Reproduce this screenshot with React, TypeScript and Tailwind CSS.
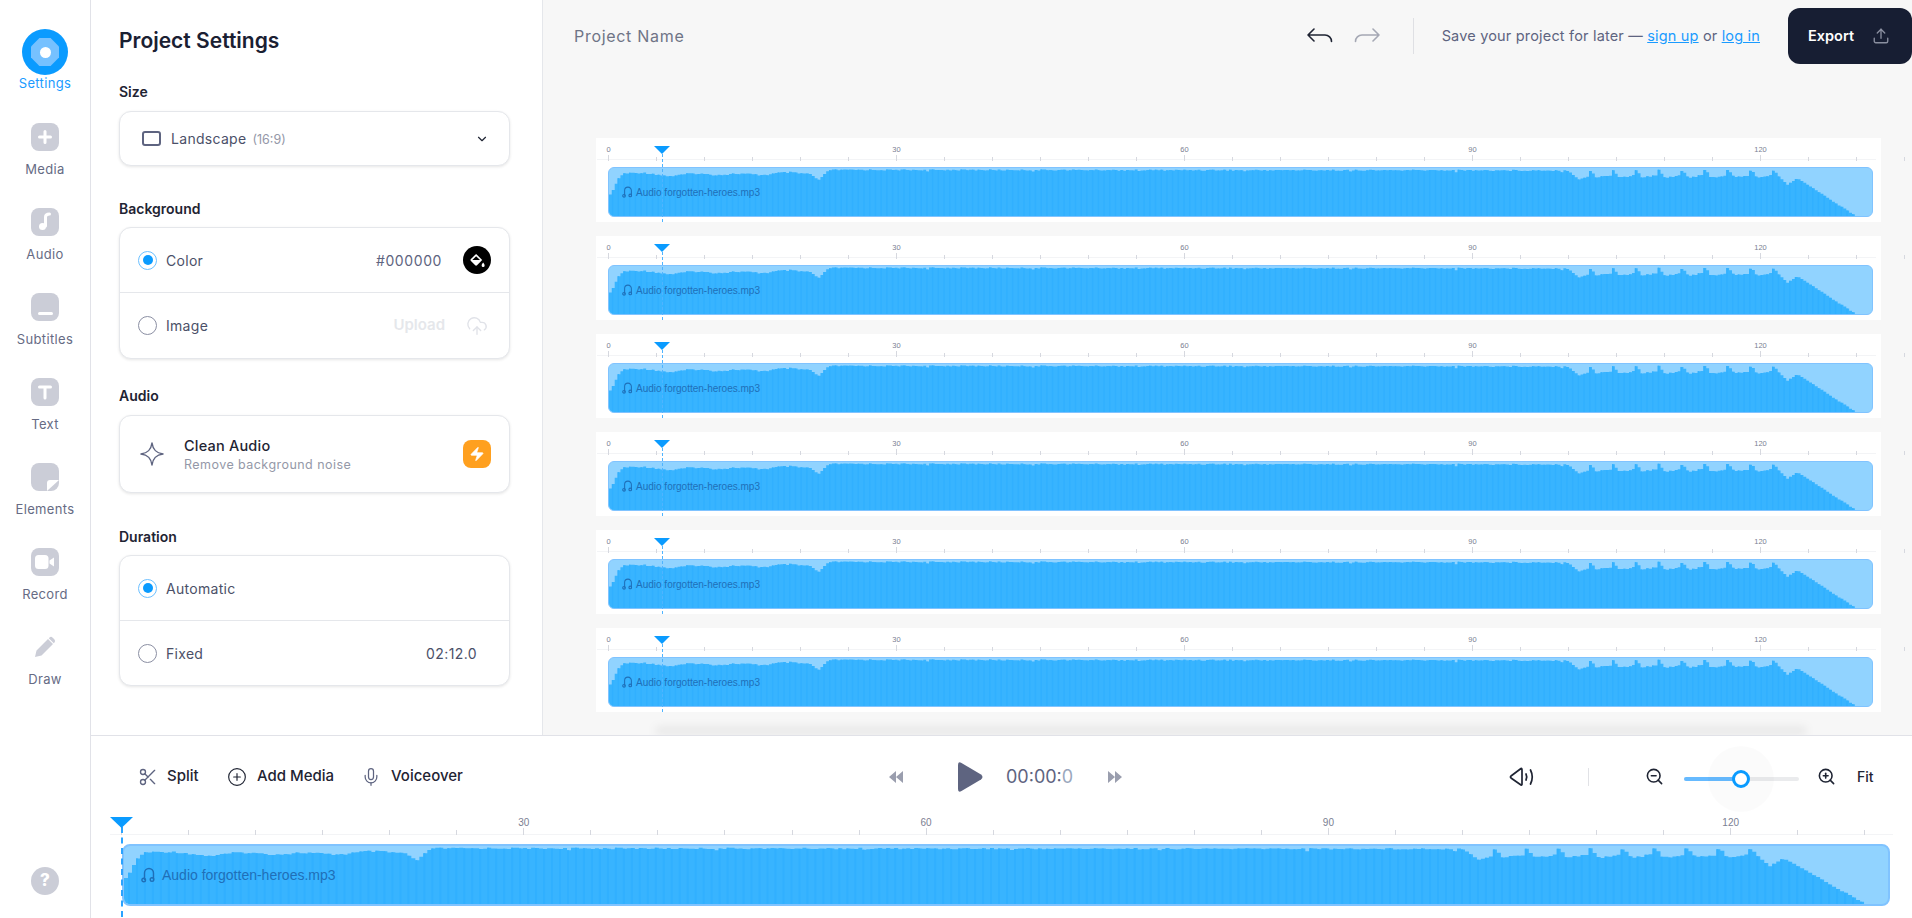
import React from "react";
import { Scissors, CirclePlus, Mic, ZoomIn, ZoomOut, ChevronDown, CloudUpload, Zap, Upload } from "lucide-react";

const N = 442;
const ctrl: [number, number][] = [
  [0, 0.55], [0.0025, 0.45], [0.006, 0.24], [0.011, 0.09], [0.03, 0.13], [0.05, 0.15], [0.08, 0.12], [0.1, 0.14],
  [0.157, 0.1], [0.165, 0.25], [0.173, 0.04], [0.758, 0.05], [0.767, 0.24], [0.775, 0.17], [0.924, 0.14], [0.932, 0.35],
  [0.94, 0.21], [0.986, 1], [1, 1],
];
function lerp(f: number) {
  for (let i = 1; i < ctrl.length; i++) {
    if (f <= ctrl[i][0]) {
      const [a, b] = ctrl[i - 1];
      const [c, d] = ctrl[i];
      return b + ((f - a) / (c - a)) * (d - b);
    }
  }
  return 1;
}
function noise(i: number) {
  const s = Math.sin(i * 12.9898) * 43758.5453;
  return s - Math.floor(s);
}
function topAt(i: number) {
  const f = i / N;
  let y = lerp(f);
  if (f > 0.011 && f < 0.157) y += Math.sin(f * 170) * 0.02 + (noise(i) - 0.5) * 0.03;
  else if (f >= 0.173 && f < 0.758) y += (noise(i) - 0.5) * 0.025 + (i % 37 === 0 ? 0.03 : 0);
  else if (f >= 0.775 && f < 0.924) {
    const saw = ((f - 0.775) / 0.0182) % 1;
    y = saw < 0.07 ? 0.05 : saw < 0.3 ? 0.05 + ((saw - 0.07) / 0.23) * 0.14 : 0.2 - (saw - 0.3) * 0.07;
    y += (noise(i) - 0.5) * 0.03;
  } else if (f >= 0.94 && f < 0.986) y += (noise(i) - 0.5) * 0.015;
  return Math.min(1, Math.max(0.02, y));
}
const tops = Array.from({ length: N }, (_, i) => topAt(i) * 100);
const basePath = "M0 100 " + tops.map((t, i) => `L${i} ${t.toFixed(1)} L${i + 1} ${t.toFixed(1)}`).join(" ") + ` L${N} 100 Z`;
const stripePath = tops.map((t, i) => (i % 2 ? `M${i} ${t.toFixed(1)} H${i + 0.5} V100 H${i} Z` : "")).join(" ");

function Note({ className }: { className: string }) {
  return (
    <svg viewBox="0 0 16 16" className={className} fill="none" stroke="#1f6fb8" strokeWidth="1.4">
      <path d="M3.5 13 V6 a4.5 4.5 0 0 1 9 0 V12.5" />
      <circle cx="2.7" cy="13" r="1.8" />
      <circle cx="11" cy="12.6" r="1.8" />
    </svg>
  );
}

function Wave({ big }: { big: boolean }) {
  return (
    <div className={big
      ? "relative h-[62px] w-[1768px] overflow-hidden rounded-lg border-2 border-[#80c3ff] bg-[#91d3ff]"
      : "relative h-[50px] w-[1265px] overflow-hidden rounded-md border border-[#80c3ff] bg-[#91d3ff]"}>
      <svg viewBox={`0 0 ${N} 100`} preserveAspectRatio="none" className="absolute inset-0 h-full w-full">
        <path d={basePath} fill="#38b4ff" />
        <path d={stripePath} fill="#31b0ff" />
      </svg>
      <div className={big
        ? "absolute inset-y-0 left-[17px] flex items-center gap-[5px] text-[14px] text-[#1f6fb8] font-['Liberation_Sans',Arial,sans-serif]"
        : "absolute inset-y-0 left-[13px] flex items-center gap-[2px] text-[10px] text-[#1f6fb8] font-['Liberation_Sans',Arial,sans-serif]"}>
        <Note className={big ? "h-4 w-4" : "h-3 w-3"} />
        <span>Audio forgotten-heroes.mp3</span>
      </div>
    </div>
  );
}

function Ruler({ big }: { big: boolean }) {
  const step = big ? 67.05 : 48;
  const count = big ? 27 : 28;
  const ticks = Array.from({ length: count }, (_, i) => i);
  return (
    <>
      {ticks.map((i) => {
        const major = i % 6 === 0;
        const h = big ? (major ? 7 : 5) : major ? 6 : 4;
        const bottomY = big ? 18 : 23;
        return (
          <React.Fragment key={i}>
            <div
              className="absolute w-px bg-[#d6d8df]"
              style={{ left: (big ? 30 : 12) + i * step, top: bottomY - h, height: h }}
            />
            {major && (i > 0 || !big) && (
              <span
                className={big
                  ? "absolute w-8 -translate-x-1/2 text-center text-[10px] leading-3 text-[#7b8092] font-['Liberation_Sans',Arial,sans-serif]"
                  : "absolute w-8 -translate-x-1/2 text-center text-[7.5px] leading-[9px] text-[#7b8092] font-['Liberation_Sans',Arial,sans-serif]"}
                style={{ left: (big ? 30.5 : 12.5) + i * step, top: big ? 0 : 7 }}
              >
                {i * 5}
              </span>
            )}
          </React.Fragment>
        );
      })}
    </>
  );
}

function Track() {
  return (
    <div className="relative h-[84px] w-[1285px] bg-white">
      <div className="absolute left-[1px] top-[21px] h-px w-[1279px] bg-[#f3f4f6]" />
      <Ruler big={false} />
      <div className="absolute left-[12px] top-[29px]">
        <Wave big={false} />
      </div>
      <div className="absolute left-[65.5px] top-[16px] h-[68px] border-l border-dashed border-[#4fb4ff]" />
      <svg viewBox="0 0 16 8" className="absolute left-[58px] top-[8px] h-2 w-4">
        <path d="M0 0H16L8 8Z" fill="#0a9bff" />
      </svg>
    </div>
  );
}

const railTile = "flex h-7 w-7 items-center justify-center rounded-lg bg-[#cbcdd7]";

function RailItem({ label, icon }: { label: string; icon: React.ReactNode }) {
  return (
    <div className="flex h-[85px] w-full flex-col items-center">
      <div className="flex h-7 items-center justify-center">{icon}</div>
      <span className="mt-[8px] text-[13px] leading-[20px] tracking-[0.35px] text-[#666b84]">{label}</span>
    </div>
  );
}

function Radio({ on }: { on: boolean }) {
  return on ? (
    <span className="flex h-[19px] w-[19px] shrink-0 items-center justify-center rounded-full border-[1.5px] border-[#6cc0ff]">
      <span className="h-[10px] w-[10px] rounded-full bg-[#0a9bff]" />
    </span>
  ) : (
    <span className="h-[19px] w-[19px] shrink-0 rounded-full border-[1.5px] border-[#8b8fa3]" />
  );
}

const cardCls = "w-[391px] rounded-xl border border-[#e5e7eb] bg-white shadow-[0_1px_3px_rgba(0,0,0,0.1)]";
const labelCls = "text-[14px] font-semibold leading-5 text-[#1f2433]";
const rowText = "ml-[9px] text-[14px] tracking-[0.3px] text-[#4b5068]";

export default function App() {
  return (
    <div className="flex h-[918px] w-full overflow-hidden bg-white font-['Inter',sans-serif]">
      {/* Rail */}
      <aside className="flex w-[91px] shrink-0 flex-col items-center border-r border-[#e1e2e8] pt-[29px]">
        <div className="flex h-[46px] w-[46px] items-center justify-center rounded-full bg-[#0a9bff]">
          <div className="flex h-7 w-7 items-center justify-center bg-[#76c1ff] [clip-path:polygon(30%_0,70%_0,100%_30%,100%_70%,70%_100%,30%_100%,0_70%,0_30%)]">
            <span className="h-[11px] w-[11px] rounded-full bg-white" />
          </div>
        </div>
        <span className="mb-[30px] mt-[-2px] text-[13px] leading-5 tracking-[0.35px] text-[#1a9bff]">Settings</span>
        <div className="w-full">
          <RailItem label="Media" icon={
            <div className={railTile}><svg viewBox="0 0 14 14" className="h-[14px] w-[14px]"><path d="M7 1.5V12.5M1.5 7H12.5" stroke="white" strokeWidth="3" strokeLinecap="round" /></svg></div>
          } />
          <RailItem label="Audio" icon={
            <div className={railTile}><svg viewBox="0 0 14 20" className="h-5 w-[14px]"><path d="M7.5 14V5 Q7.5 2 11.5 2" stroke="white" strokeWidth="3" fill="none" strokeLinecap="round" /><circle cx="4.5" cy="14.5" r="3.5" fill="white" /></svg></div>
          } />
          <RailItem label="Subtitles" icon={
            <div className={`${railTile} items-end pb-[6px]`}><span className="h-[3px] w-[15px] rounded-full bg-white" /></div>
          } />
          <RailItem label="Text" icon={
            <div className={railTile}><svg viewBox="0 0 16 16" className="h-4 w-4"><path d="M2.5 3H13.5M8 3V14" stroke="white" strokeWidth="3" strokeLinecap="round" /></svg></div>
          } />
          <RailItem label="Elements" icon={
            <div className={`${railTile} relative overflow-hidden`}>
              <svg viewBox="0 0 28 28" className="absolute inset-0 h-7 w-7"><path d="M16 28V20Q16 17 19 17H28L16 28Z" fill="white" /></svg>
            </div>
          } />
          <RailItem label="Record" icon={
            <div className={railTile}><svg viewBox="0 0 20 14" className="h-[14px] w-5"><rect x="0" y="0" width="13.5" height="14" rx="3.5" fill="white" /><path d="M14.5 5.5L19 2.5V11.5L14.5 8.5Z" fill="white" /></svg></div>
          } />
          <RailItem label="Draw" icon={
            <svg viewBox="0 0 24 24" className="h-[24px] w-[24px]"><path d="M2 22 L3.5 15.5 L15 4 L20 9 L8.5 20.5Z M16.3 2.7 Q18 1 19.7 2.7 L21.3 4.3 Q23 6 21.3 7.7 L20.8 8.2 L15.8 3.2Z" fill="#cbcdd7" /></svg>
          } />
        </div>
        <div className="mb-[23px] mt-auto flex h-7 w-7 items-center justify-center rounded-full bg-[#cbcdd7] text-[17px] font-extrabold text-white">?</div>
      </aside>

      <div className="flex min-w-0 flex-1 flex-col">
        <div className="flex h-[736px] border-b border-[#e1e2e8]">
          {/* Settings panel */}
          <section className="w-[452px] shrink-0 border-r border-[#e5e7eb] bg-white pl-[28px] pt-[29px]">
            <h1 className="text-[21px] font-semibold leading-6 text-[#1a2032]">Project Settings</h1>

            <h2 className={`mt-[29px] ${labelCls}`}>Size</h2>
            <div className={`mt-[9px] flex h-[55px] items-center pl-[22px] pr-[20px] ${cardCls}`}>
              <span className="h-[15px] w-[19px] rounded-[3px] border-2 border-[#5e6480]" />
              <span className="ml-[10px] flex items-baseline">
                <span className="text-[14px] tracking-[0.3px] text-[#4b5068]">Landscape</span>
                <span className="ml-[6px] text-[12.5px] text-[#9498a8]">(16:9)</span>
              </span>
              <ChevronDown className="ml-auto h-[14px] w-[14px] text-[#1f2433]" strokeWidth={2} />
            </div>

            <h2 className={`mt-[33px] ${labelCls}`}>Background</h2>
            <div className={`mt-[8px] flex h-[132px] flex-col ${cardCls}`}>
              <div className="flex h-[65px] items-center border-b border-[#e5e7eb] pl-[18px] pr-[18px]">
                <Radio on />
                <span className={rowText}>Color</span>
                <span className="ml-auto text-[14px] tracking-[0.6px] text-[#5e6480]">#000000</span>
                <span className="ml-[21px] flex h-7 w-7 items-center justify-center rounded-full bg-black">
                  <svg viewBox="0 0 16 16" className="h-[15px] w-[15px]">
                    <path d="M6.5 1 L13 7.5 L7.5 13 Q6.5 14 5.5 13 L1 8.5 Q0 7.5 1 6.5Z" fill="white" />
                    <path d="M6.5 3.5 L10.7 7.5 H2.5Z" fill="black" />
                    <path d="M14 10 Q15.8 12.3 15.6 13.3 A1.6 1.6 0 0 1 12.4 13.3 Q12.2 12.3 14 10Z" fill="white" />
                  </svg>
                </span>
              </div>
              <div className="flex flex-1 items-center pl-[18px] pr-[21px]">
                <Radio on={false} />
                <span className={rowText}>Image</span>
                <span className="ml-auto text-[15px] font-semibold text-[#e5e7eb]">Upload</span>
                <CloudUpload className="ml-[21px] h-[22px] w-[22px] text-[#e0e2e8]" strokeWidth={1.5} />
              </div>
            </div>

            <h2 className={`mt-[27px] ${labelCls}`}>Audio</h2>
            <div className={`mt-[9px] flex h-[78px] items-center pl-[20px] pr-[18px] ${cardCls}`}>
              <svg viewBox="0 0 24 24" className="h-6 w-6" fill="none" stroke="#5e6480" strokeWidth="1.5" strokeLinejoin="round">
                <path d="M12 1 C13 8 16 11 23 12 C16 13 13 16 12 23 C11 16 8 13 1 12 C8 11 11 8 12 1Z" />
              </svg>
              <div className="ml-[20px] flex flex-col pt-[2px]">
                <span className="text-[14.5px] font-medium leading-[19px] tracking-[0.2px] text-[#1f2433]">Clean Audio</span>
                <span className="text-[12.5px] leading-[19px] tracking-[0.45px] text-[#9498a8]">Remove background noise</span>
              </div>
              <span className="ml-auto flex h-7 w-7 items-center justify-center rounded-lg bg-[#ffa01f]">
                <Zap className="h-4 w-4 fill-white text-white" strokeWidth={1} />
              </span>
            </div>

            <h2 className={`mt-[34px] ${labelCls}`}>Duration</h2>
            <div className={`mt-[8px] flex h-[131px] flex-col ${cardCls}`}>
              <div className="flex h-[65px] items-center border-b border-[#e5e7eb] pl-[18px]">
                <Radio on />
                <span className={rowText}>Automatic</span>
              </div>
              <div className="flex flex-1 items-center pl-[18px] pr-[32px]">
                <Radio on={false} />
                <span className={rowText}>Fixed</span>
                <span className="ml-auto text-[14px] tracking-[0.4px] text-[#4b5068]">02:12.0</span>
              </div>
            </div>
          </section>

          {/* Main */}
          <main className="relative flex min-w-0 flex-1 flex-col overflow-hidden bg-[#f7f7f7]">
            <div className="absolute bottom-[1px] left-[112px] h-[7px] w-[1152px] rounded-full bg-black/[0.07] blur-[4px]" />
            <header className="relative flex h-[72px] items-center pl-[31px]">
              <span className="text-[16px] tracking-[0.7px] text-[#6f7486]">Project Name</span>
              <div className="ml-auto flex items-center">
                <svg viewBox="0 0 26 16" className="h-4 w-[26px] shrink-0" fill="none" stroke="#1f2433" strokeWidth="1.6" strokeLinecap="round" strokeLinejoin="round">
                  <path d="M7 1 L1 7 L7 13 M1 7 H18 a6.5 6.5 0 0 1 6.5 6.5" />
                </svg>
                <svg viewBox="0 0 26 16" className="ml-[21px] h-4 w-[26px] shrink-0" fill="none" stroke="#a5a8b4" strokeWidth="1.6" strokeLinecap="round" strokeLinejoin="round">
                  <path d="M19 1 L25 7 L19 13 M25 7 H8 a6.5 6.5 0 0 0 -6.5 6.5" />
                </svg>
                <span className="ml-[33px] h-9 w-px bg-[#dfe0e4]" />
                <span className="ml-[28px] whitespace-nowrap text-[14.5px] tracking-[0.18px] text-[#5e6480]">
                  Save your project for later — <a className="text-[#1a9bff] underline">sign up</a> or <a className="text-[#1a9bff] underline">log in</a>
                </span>
                <div className="ml-[28px] flex h-14 w-[124px] items-center rounded-xl bg-[#171e33] pl-5">
                  <span className="text-[14.5px] font-semibold text-white">Export</span>
                  <Upload className="ml-[18px] h-[18px] w-[18px] text-[#8a8fa0]" strokeWidth={1.8} />
                </div>
              </div>
            </header>
            <div className="relative ml-[53px] mt-[66px] flex flex-col gap-[14px]">
              <Track /><Track /><Track /><Track /><Track /><Track />
            </div>
          </main>
        </div>

        {/* Bottom */}
        <div className="flex-1 bg-white">
          <div className="flex h-[81px] items-center pl-[47px]">
            <div className="flex w-[751px] shrink-0 items-center text-[15px] font-medium text-[#1f2433]">
              <Scissors className="h-5 w-5 text-[#5e6480]" strokeWidth={1.6} />
              <span className="ml-[9px] w-[32px]">Split</span>
              <CirclePlus className="ml-[28px] h-5 w-5" strokeWidth={1.4} />
              <span className="ml-[10px] w-[77px] whitespace-nowrap">Add Media</span>
              <Mic className="ml-[27px] h-5 w-5 text-[#5e6480]" strokeWidth={1.5} />
              <span className="ml-[10px]">Voiceover</span>
            </div>
            <div className="flex w-[699px] shrink-0 items-center">
              <svg viewBox="0 0 14 12" className="h-3 w-[14px] shrink-0"><path d="M7 0V12L0 6ZM14 0V12L7 6Z" fill="#9a9eae" /></svg>
              <svg viewBox="0 0 25 30" className="ml-[55px] h-[30px] w-[25px] shrink-0"><path d="M0 3 Q0 -1 3.5 1 L23 12.5 Q26 15 23 17.5 L3.5 29 Q0 31 0 27Z" fill="#5e6480" /></svg>
              <span className="ml-[23px] w-[70px] shrink-0 text-[18px] text-[#5e6480]">00:00:<span className="text-[#9aa7bd]">0</span></span>
              <svg viewBox="0 0 14 12" className="ml-[32px] h-3 w-[14px] shrink-0"><path d="M0 0V12L7 6ZM7 0V12L14 6Z" fill="#9a9eae" /></svg>
              <svg viewBox="0 0 26 20" className="ml-[387px] h-5 w-[26px] shrink-0" fill="none" stroke="#1f2433" strokeWidth="1.7" strokeLinecap="round" strokeLinejoin="round">
                <path d="M12 1.5 L2 9 Q1 10 2 11 L12 18 Q13 18.5 13 17 V3 Q13 1 12 1.5Z" />
                <path d="M17 7 Q18.5 10 17 13" />
                <path d="M21.5 3 Q25 10 21.5 17" />
              </svg>
            </div>
            <div className="relative flex items-center">
              <span className="h-[18px] w-px bg-[#e1e2e6]" />
              <ZoomOut className="ml-[56px] h-[19px] w-[19px] shrink-0 text-[#1f2433]" strokeWidth={2} />
              <div className="relative ml-[20px] mt-[4px] h-1 w-[115px] shrink-0 rounded-full bg-[#eaebed]">
                <div className="h-1 w-[57px] rounded-full bg-[#66baff]" />
                <div className="absolute left-[24px] top-[-31px] h-[66px] w-[66px] rounded-full bg-black/[0.015]" />
                <div className="absolute left-[48px] top-[-7px] h-[18px] w-[18px] rounded-full border-[3.5px] border-[#0a9bff] bg-white" />
              </div>
              <ZoomIn className="ml-[18px] h-[19px] w-[19px] shrink-0 text-[#1f2433]" strokeWidth={2} />
              <span className="ml-[21px] text-[14px] font-medium text-[#1f2433]">Fit</span>
            </div>
          </div>
          <div className="relative h-[100px]">
            <div className="absolute left-[19px] top-[17px] h-px w-[1783px] bg-[#f3f4f6]" />
            <Ruler big />
            <div className="absolute left-[31px] top-[27px]">
              <Wave big />
            </div>
            <div className="absolute left-[29.5px] top-[10px] h-[90px] border-l-2 border-dashed border-[#2aa3ff]" />
            <svg viewBox="0 0 23 11" className="absolute left-[19px] top-0 h-[11px] w-[23px]">
              <path d="M0 0H23L11.5 11Z" fill="#0a9bff" />
            </svg>
          </div>
        </div>
      </div>
    </div>
  );
}
